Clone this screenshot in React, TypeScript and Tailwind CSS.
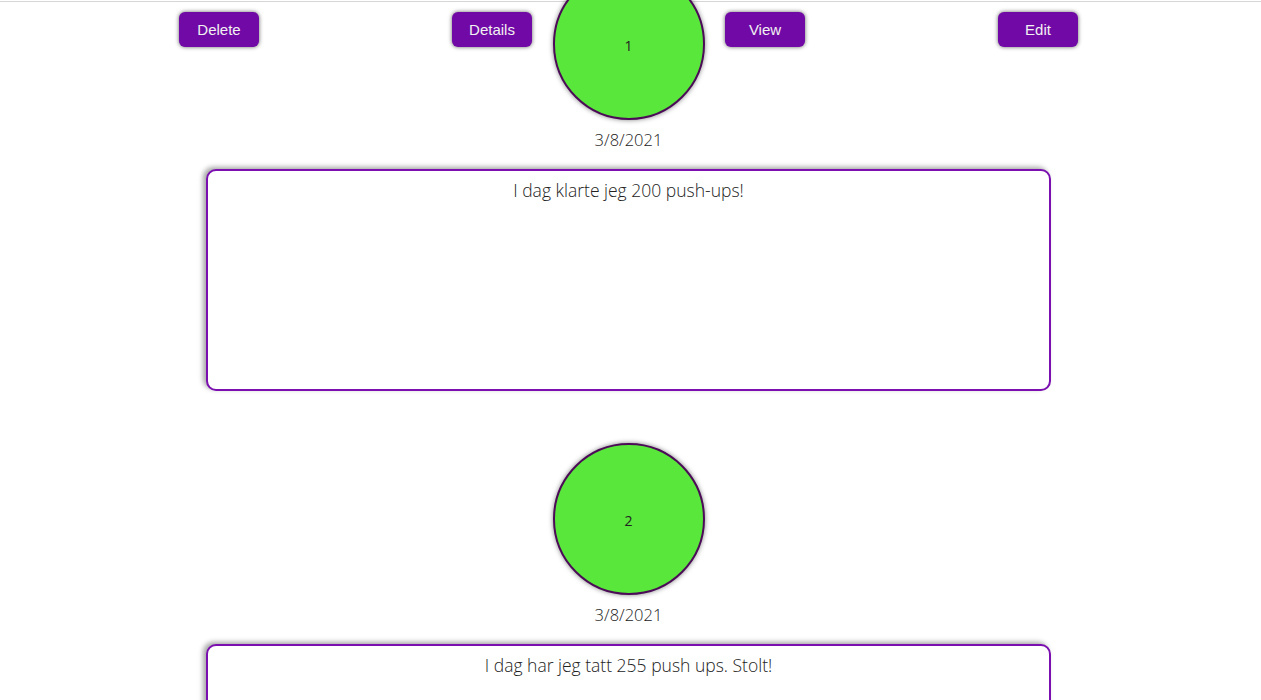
const posts = [
  { id: 1, date: "3/8/2021", text: "I dag klarte jeg 200 push-ups!" },
  { id: 2, date: "3/8/2021", text: "I dag har jeg tatt 255 push ups. Stolt!" },
];

const actions = ["Delete", "Details", "View", "Edit"];

function PostItem({ id, date, text }: { id: number; date: string; text: string }) {
  return (
    <div className="flex flex-col items-center mb-[52px]">
      <div className="flex h-[152px] w-[152px] items-center justify-center rounded-full border-2 border-[#4b0b57] bg-[#59e73b] pt-[2px] text-[14px] text-[#222] shadow-[0_0_5px_rgba(0,0,0,0.5)]">
        {id}
      </div>
      <p className="mt-[8px] h-6 text-[16.5px] leading-6 font-light text-[#222]">{date}</p>
      <div className="mt-[17px] h-[222px] w-[845px] rounded-[10px] border-2 border-[#7b0fb0] bg-white px-4 pt-[6px] text-center text-[17.5px] font-light text-[#222] shadow-[-3px_-2px_5px_rgba(0,0,0,0.35)]">
        {text}
      </div>
    </div>
  );
}

export default function App() {
  return (
    <div className="relative h-[700px] overflow-hidden bg-white" style={{ fontFamily: '"Open Sans", sans-serif' }}>
      <div className="mt-px h-px w-full bg-[#d6d6d6]" />
      <div className="-mt-[34px] w-[1257px]">
        {posts.map((p) => (
          <PostItem key={p.id} {...p} />
        ))}
      </div>
      <div className="absolute left-0 top-[12px] w-[1257px]">
        <div className="mx-auto grid w-[1092px] grid-cols-4 justify-items-center">
          {actions.map((a) => (
            <button
              key={a}
              className="h-[35px] w-[80px] rounded-[6px] bg-[#7109a6] pt-[2px] text-[15px] text-[#f1f1f1] shadow-[0_0_4px_rgba(0,0,0,0.6)]"
              style={{ fontFamily: '"Liberation Sans", Arial, sans-serif' }}
            >
              {a}
            </button>
          ))}
        </div>
      </div>
    </div>
  );
}
